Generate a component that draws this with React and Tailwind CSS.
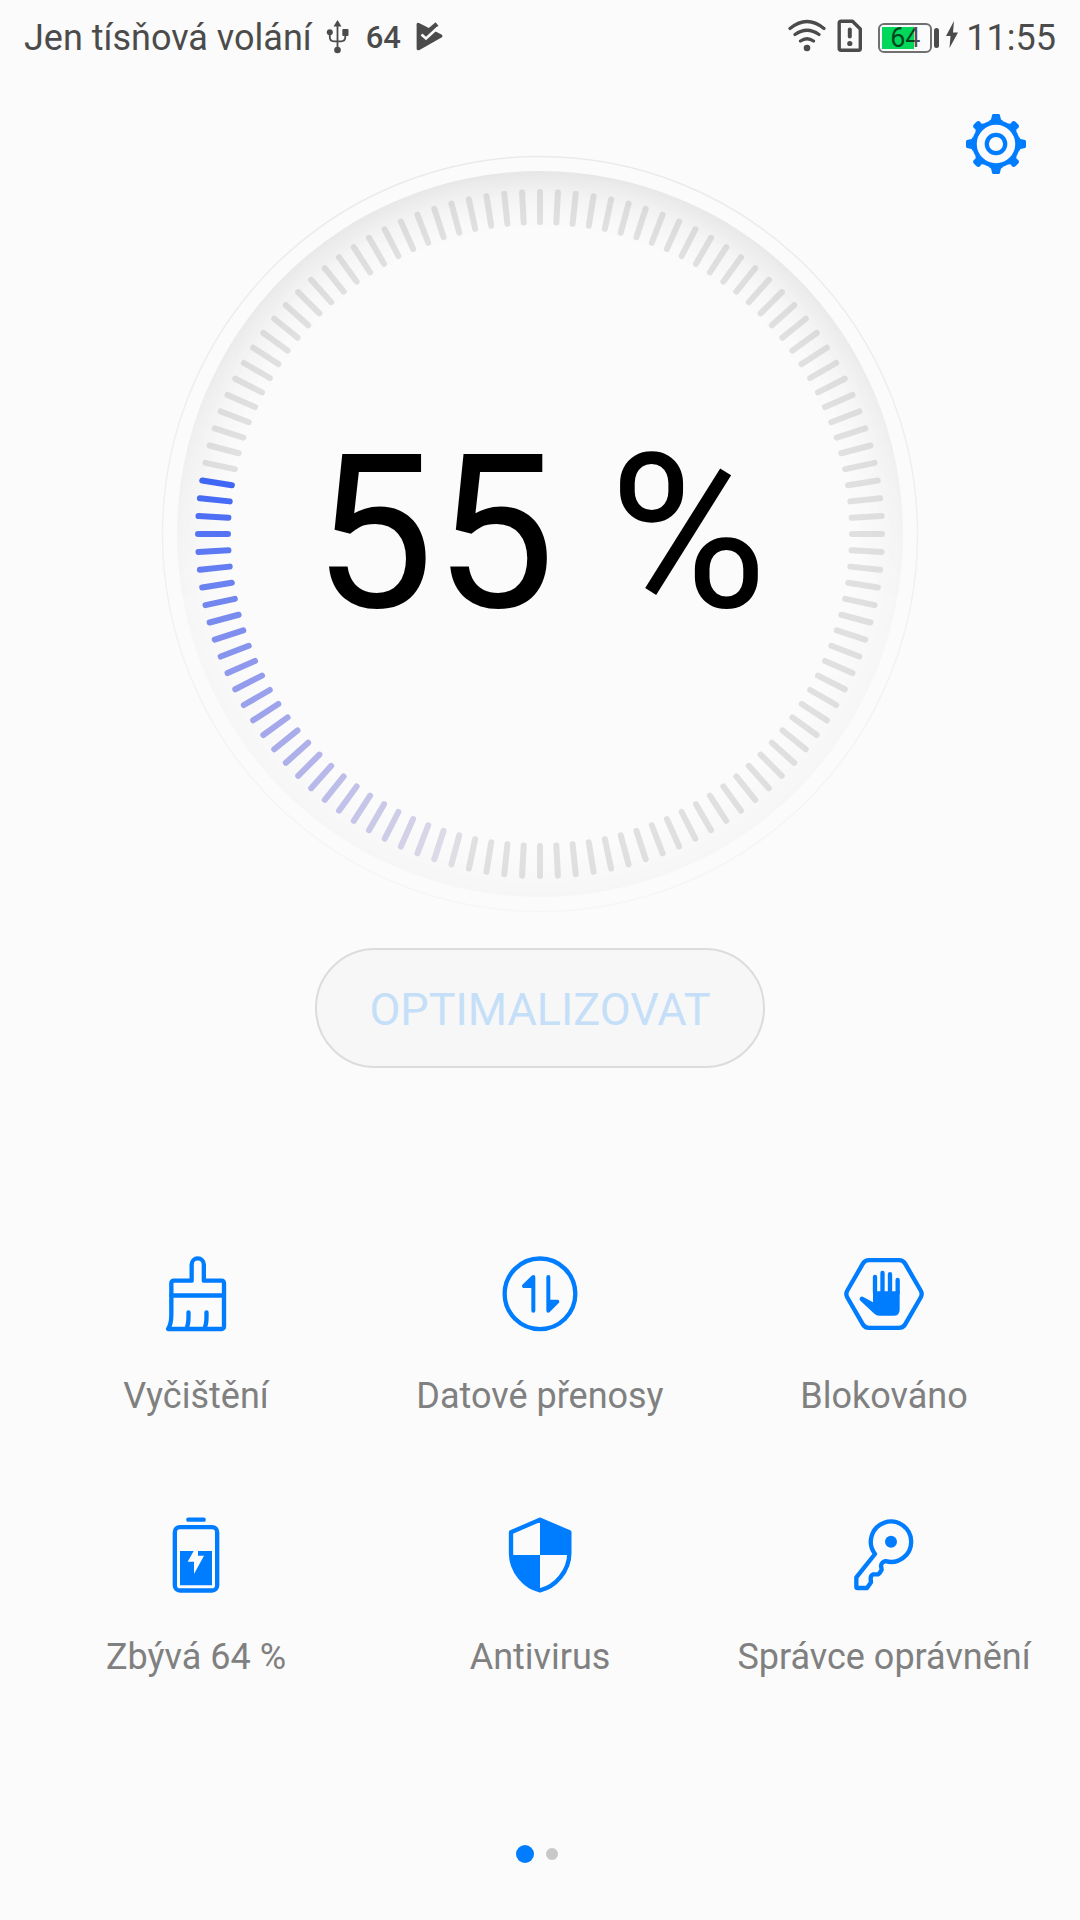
const TICKS = 120;
const LIT_FROM = 65; // first coloured tick, clockwise from the top
const LIT_TO = 93;

// fade of the lit ticks, from the tail to the head
const STOPS = [
  [0, [223, 222, 229]],
  [0.35, [181, 181, 234]],
  [0.62, [140, 151, 237]],
  [1, [64, 102, 246]],
];

function tickColor(t) {
  let i = 0;
  while (i < STOPS.length - 2 && t > STOPS[i + 1][0]) i++;
  const [t0, a] = STOPS[i];
  const [t1, b] = STOPS[i + 1];
  const k = (t - t0) / (t1 - t0);
  return `rgb(${a.map((v, n) => Math.round(v + (b[n] - v) * k)).join(",")})`;
}

function Gauge({ value }) {
  return (
    <div className="grid place-items-center" role="img" aria-label={`${value} %`}>
      <svg viewBox="-380 -380 760 760" className="col-start-1 row-start-1 w-[760px] max-w-full">
        <defs>
          <radialGradient id="rim" gradientUnits="userSpaceOnUse" cx="0" cy="0" r="363">
            <stop offset="0.87" stopColor="#000" stopOpacity="0" />
            <stop offset="1" stopColor="#000" stopOpacity="0.02" />
          </radialGradient>
          <radialGradient id="shade" gradientUnits="userSpaceOnUse" cx="0" cy="0" r="363">
            <stop offset="0.84" stopColor="#000" stopOpacity="0" />
            <stop offset="0.93" stopColor="#000" stopOpacity="0.02" />
            <stop offset="1" stopColor="#000" stopOpacity="0.06" />
          </radialGradient>
          <linearGradient id="fall" x1="0" y1="0" x2="0" y2="1">
            <stop offset="0" stopColor="#fff" />
            <stop offset="0.25" stopColor="#bbb" />
            <stop offset="0.6" stopColor="#000" />
          </linearGradient>
          <mask id="top">
            <rect x="-380" y="-380" width="760" height="760" fill="url(#fall)" />
          </mask>
          <linearGradient id="ring" x1="0" y1="0" x2="0" y2="1">
            <stop offset="0" stopColor="#eaeaea" />
            <stop offset="1" stopColor="#f6f6f6" />
          </linearGradient>
        </defs>
        <circle r="377.5" fill="none" stroke="url(#ring)" strokeWidth="1.5" />
        <circle r="363" fill="url(#rim)" />
        <circle r="363" fill="url(#shade)" mask="url(#top)" />
        {Array.from({ length: TICKS }, (_, i) => {
          const lit = i >= LIT_FROM && i <= LIT_TO;
          return (
            <line
              key={i}
              y1="-342"
              y2="-312"
              transform={`rotate(${i * 3})`}
              stroke={lit ? tickColor((i - LIT_FROM) / (LIT_TO - LIT_FROM)) : "#b0b0b0"}
              strokeOpacity={lit ? 1 : 0.35}
              strokeWidth="6"
              strokeLinecap="round"
            />
          );
        })}
      </svg>
      <p className="col-start-1 row-start-1 text-[216px] leading-none text-black whitespace-nowrap">
        {value} %
      </p>
    </div>
  );
}

function StatusBar() {
  return (
    <header className="flex h-[76px] items-center justify-between px-6 text-4xl text-[#4b4b4b]">
      <div className="flex items-center">
        <span>Jen tísňová volání</span>
        <svg viewBox="0 0 24 40" className="ml-[14px] h-10 w-6" fill="currentColor">
          <path d="M11.5 2 7.5 8.5h8z" />
          <path
            d="M11.5 6v26M3.8 14v5Q3.8 23.3 8 23.3h7q4.3 0 4.3-4.3v-5"
            fill="none"
            stroke="currentColor"
            strokeWidth="1.8"
          />
          <circle cx="3.8" cy="14.3" r="3" />
          <rect x="16.3" y="11" width="6.2" height="7" rx="1" />
          <circle cx="11.5" cy="32" r="3.3" />
        </svg>
        <span className="ml-4 text-[31px] font-medium">64</span>
        <svg viewBox="0 0 28 40" className="ml-[15px] h-10 w-7" fill="none" stroke="currentColor">
          <path
            d="M.6 6.5Q.6 4 3 5L25.5 16.5Q27.500 18 25.5 19.5L3.5 32Q.6 33 .6 30.5Z"
            fill="currentColor"
            stroke="none"
          />
          <path d="M10 15.5 21 6" strokeWidth="4.5" />
          <path d="M5.5 16.500 10 20.5 22 9.5" stroke="#fbfbfb" strokeWidth="2.6" />
        </svg>
      </div>
      <div className="flex items-center">
        <svg
          viewBox="0 0 40 40"
          className="h-10 w-10"
          fill="none"
          stroke="currentColor"
          strokeWidth="3.2"
          strokeLinecap="round"
        >
          <path d="M3 10.5Q20-3.5 37 10.5M8 16.5Q20 8 32 16.5M13.5 23Q20 18.5 26.5 23" />
          <circle cx="20" cy="30" r="3.3" fill="currentColor" stroke="none" />
        </svg>
        <svg
          viewBox="0 0 26 40"
          className="ml-[10px] h-10 w-[26px]"
          fill="none"
          stroke="currentColor"
          strokeLinejoin="round"
        >
          <path
            d="M4 3.2H15.5L23.3 11V30.5Q23.3 32.3 21.5 32.3H4Q2.2 32.3 2.2 30.5V5Q2.2 3.2 4 3.2Z"
            strokeWidth="3.4"
          />
          <path d="M12.8 11.5V18.5" strokeWidth="4" strokeLinecap="round" />
          <circle cx="12.8" cy="25.5" r="2.6" fill="currentColor" stroke="none" />
        </svg>
        <div className="ml-[15px] grid h-[30px] w-[54px] items-center rounded-md border-2 border-[#707070] p-[2px]">
          <div className="col-start-1 row-start-1 h-[22px] w-[32px] bg-[#00d75b]" />
          <span className="col-start-1 row-start-1 text-center text-[27px] leading-[22px] text-black/70">
            64
          </span>
        </div>
        <div className="ml-[2px] h-5 w-[5px] rounded-sm bg-current" />
        <svg viewBox="0 0 12 40" className="ml-[7px] h-10 w-3" fill="currentColor">
          <path d="M8 3 0 18H4.5L3.5 30 12 14.5H7Z" />
        </svg>
        <span className="ml-2">11:55</span>
      </div>
    </header>
  );
}

function GearIcon() {
  return (
    <svg viewBox="-30 -30 60 60" className="size-[60px]" fill="currentColor">
      <circle r="21.5" fill="none" stroke="currentColor" strokeWidth="4.5" />
      <circle r="9.2" fill="none" stroke="currentColor" strokeWidth="4.3" />
      {[0, 90, 180, 270].map((a) => (
        <g key={a} transform={`rotate(${a})`}>
          <path d="M-2.6-30H2.6Q3.7-30 3.9-29L5-24.5 8-22.5H-8L-5-24.5-3.9-29Q-3.7-30-2.6-30Z" />
          <path
            transform="rotate(45)"
            d="M-2-29.5H2Q4.5-29 4.5-27L4-25 6.5-22H-6.5L-4-25-4.5-27Q-4.5-29-2-29.5Z"
          />
        </g>
      ))}
    </svg>
  );
}

function TileIcon({ children }) {
  return (
    <svg
      viewBox="0 0 288 288"
      className="size-24 text-[#007dff]"
      fill="none"
      stroke="currentColor"
      strokeWidth="13"
      strokeLinejoin="round"
      aria-hidden="true"
    >
      {children}
    </svg>
  );
}

const TILES = [
  {
    label: "Vyčištění",
    icon: (
      <g strokeLinecap="round">
        <path d="M131 104V55.5A18.2 18.2 0 0 1 167.500 55.5V104H221A7 7 0 0 1 228 111V242A7 7 0 0 1 221 249H60C67 240 70 225 70 205V111A7 7 0 0 1 77 104H131" />
        <path d="M70 148.5H228M121.5 199V212C121.5 230 119 240 115 248M175.5 199V212C175.5 230 173 240 169 248" />
      </g>
    ),
  },
  {
    label: "Datové přenosy",
    icon: (
      <>
        <circle cx="144" cy="143.5" r="106" />
        <g fill="currentColor" strokeWidth="12" strokeLinecap="round">
          <path d="M124 194V93L96 120H124" />
          <path d="M169 93V194L196 167H169" />
        </g>
      </>
    ),
  },
  {
    label: "Blokováno",
    icon: (
      <>
        <path d="M99 42.5H189Q201.4 42.5 207.4 52.9L254 133.6Q260 144 254 154.4L207.4 235.1Q201.4 245.5 189 245.5H99Q86.6 245.5 80.6 235.1L34 154.4Q28 144 34 133.6L80.6 52.9Q86.6 42.5 99 42.5Z" />
        <path d="M117 93V140M139.5 81V140M162 84.5V140M185 102V140" strokeLinecap="round" />
        <path
          d="M111 136V169L82 153A7 7 0 0 0 74 165L115 203Q121 209 130 209H173Q191 209 191 191V136Z"
          fill="currentColor"
          stroke="none"
        />
      </>
    ),
  },
  {
    label: "Zbývá 64 %",
    icon: (
      <>
        <path d="M121 38H167" strokeLinecap="round" />
        <rect x="80.5" y="60.5" width="127" height="190" rx="15" />
        <path
          d="M96 132H137L119 164H138V201L168 146H150V132H192V235H96Z"
          fill="currentColor"
          stroke="none"
        />
      </>
    ),
  },
  {
    label: "Antivirus",
    icon: (
      <>
        <path d="M144 38 57 76V139C57 192 98 240 144 250C190 240 232 192 232 139V76Z" />
        <path
          d="M144 38 232 76V144H144ZM144 144H57C59 195 98 240 144 250Z"
          fill="currentColor"
          stroke="none"
        />
      </>
    ),
  },
  {
    label: "Správce oprávnění",
    icon: (
      <>
        <path d="M117 141A60.5 60.5 0 1 1 149 162.5C143 162 135 170 135 176L137 188Q133 196 127 202H112Q104 205 104 214L105 226 93 243H65Q61 243 61 239V211Z" />
        <circle cx="165" cy="104" r="18" fill="currentColor" stroke="none" />
      </>
    ),
  },
];

export default function App() {
  return (
    <div className="flex min-h-screen flex-col bg-[#fbfbfb] font-[Roboto,sans-serif]">
      <StatusBar />
      <main className="flex grow flex-col">
        <div className="z-10 flex justify-end pt-[38px] pr-[54px]">
          <button type="button" aria-label="Nastavení" className="text-[#007dff]">
            <GearIcon />
          </button>
        </div>
        <div className="-mt-5 flex flex-col items-center">
          <Gauge value={55} />
          <button
            type="button"
            disabled
            className="mt-[34px] h-[120px] w-[450px] rounded-full border-2 border-[#dcdcdc] bg-[#f7f7f7] pt-1 text-[45px] text-[#c5dff8]"
          >
            OPTIMALIZOVAT
          </button>
        </div>
        <div className="mt-[178px] grid grid-cols-3 gap-y-[87px] px-6">
          {TILES.map(({ label, icon }) => (
            <button key={label} type="button" className="flex flex-col items-center gap-[30px]">
              <TileIcon>{icon}</TileIcon>
              <span className="text-4xl leading-[48px] whitespace-nowrap text-[#808080]">
                {label}
              </span>
            </button>
          ))}
        </div>
        <div className="mt-auto flex items-center justify-center gap-[9px] pt-10 pr-1 pb-[57px]">
          <span className="size-[18px] rounded-full bg-[#007dff]" />
          <span className="grid size-[18px] place-items-center">
            <span className="size-3 rounded-full bg-[#c8c8c8]" />
          </span>
        </div>
      </main>
    </div>
  );
}
